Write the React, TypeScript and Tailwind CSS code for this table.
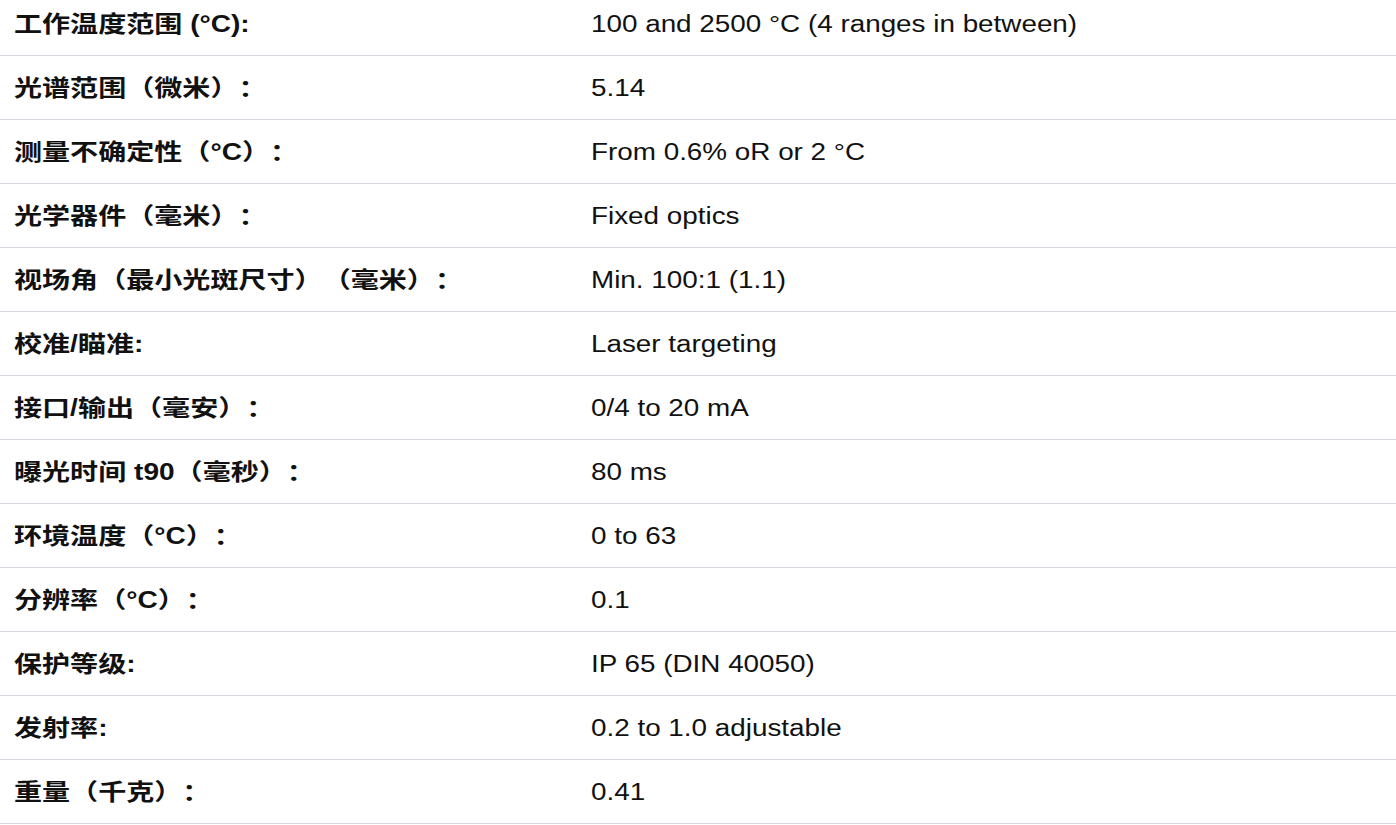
import React from "react";

const specs: [string, string][] = [
  ["工作温度范围 (°C):", "100 and 2500 °C (4 ranges in between)"],
  ["光谱范围（微米）：", "5.14"],
  ["测量不确定性（°C）：", "From 0.6% oR or 2 °C"],
  ["光学器件（毫米）：", "Fixed optics"],
  ["视场角（最小光斑尺寸）（毫米）：", "Min. 100:1 (1.1)"],
  ["校准/瞄准:", "Laser targeting"],
  ["接口/输出（毫安）：", "0/4 to 20 mA"],
  ["曝光时间 t90（毫秒）：", "80 ms"],
  ["环境温度（°C）：", "0 to 63"],
  ["分辨率（°C）：", "0.1"],
  ["保护等级:", "IP 65 (DIN 40050)"],
  ["发射率:", "0.2 to 1.0 adjustable"],
  ["重量（千克）：", "0.41"],
];

const App = () => {
  return (
    <div
      className="w-full bg-white text-[#111] -mt-[8px] [text-spacing-trim:space-all]"
      style={{ fontFamily: '"Liberation Sans", Arial, "Noto Sans CJK SC", sans-serif' }}
    >
      {specs.map(([label, value]) => (
        <div
          key={label}
          className="grid grid-cols-[577px_1fr] h-[64px] pt-[2px] items-center border-b border-[#d3d9de]"
        >
          <div className="pl-[14px]">
            <span className="inline-block text-[23px] leading-[28px] font-bold whitespace-nowrap scale-x-[1.22] origin-left">
              {label}
            </span>
          </div>
          <div className="pl-[14px]">
            <span className="inline-block text-[23px] leading-[28px] whitespace-nowrap scale-x-[1.21] origin-left">
              {value}
            </span>
          </div>
        </div>
      ))}
    </div>
  );
};

export default App;
